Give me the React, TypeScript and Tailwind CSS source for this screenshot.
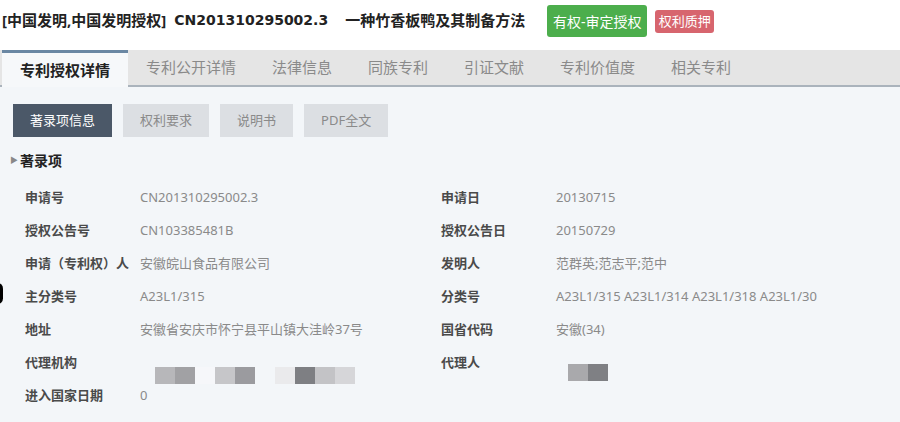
import React from 'react';

const font = { fontFamily: '"Noto Sans", "Noto Sans CJK SC", sans-serif' };

const tabs = ['专利授权详情', '专利公开详情', '法律信息', '同族专利', '引证文献', '专利价值度', '相关专利'];
const buttons = ['著录项信息', '权利要求', '说明书', 'PDF全文'];

const leftBlocks = ['#b7b7ba', '#a1a1a4', '#f6f7fa', '#c6c6c9', '#9b9b9f', 'transparent', '#eaeaec', '#7e7f83', '#c3c3c6', '#d6d6d9'];
const rightBlocks = ['#a9a9ac', '#7f8084'];

type Row = [string, React.ReactNode, string, React.ReactNode];

const Blur = ({ colors, className }: { colors: string[]; className: string }) => (
  <div className={`flex ${className}`}>
    {colors.map((c, i) => (
      <div key={i} className="w-[20px] h-[17px]" style={{ backgroundColor: c }} />
    ))}
  </div>
);

const rows: Row[] = [
  ['申请号', 'CN201310295002.3', '申请日', '20130715'],
  ['授权公告号', 'CN103385481B', '授权公告日', '20150729'],
  ['申请（专利权）人', '安徽皖山食品有限公司', '发明人', '范群英;范志平;范中'],
  ['主分类号', 'A23L1/315', '分类号', 'A23L1/315 A23L1/314 A23L1/318 A23L1/30'],
  ['地址', '安徽省安庆市怀宁县平山镇大洼岭37号', '国省代码', '安徽(34)'],
  [
    '代理机构',
    <Blur colors={leftBlocks} className="ml-[15px] translate-y-[13px]" />,
    '代理人',
    <Blur colors={rightBlocks} className="ml-[12px] translate-y-[10px]" />,
  ],
  ['进入国家日期', '0', '', ''],
];

export default function App() {
  return (
    <div className="relative w-[900px] h-[422px] overflow-hidden bg-white" style={font}>
      {/* header */}
      <div className="h-[50px] flex items-start pt-[8px] pl-[2px]">
        <div className="flex items-center h-[24px] text-[15px] font-bold text-[#222]">
          <span>[中国发明,中国发明授权]</span>
          <span className="ml-[8px] text-[14px]" style={{ fontFamily: '"DejaVu Sans", sans-serif' }}>
            CN201310295002.3
          </span>
          <span className="ml-[17px]">一种竹香板鸭及其制备方法</span>
        </div>
        <div className="ml-[22px] -mt-[3px] h-[32px] w-[100px] rounded-[3px] bg-[#4cae4c] text-white text-[14px] flex items-center justify-center">
          有权-审定授权
        </div>
        <div className="ml-[8px] mt-[2px] h-[23px] w-[59px] rounded-[3px] bg-[#d7656e] text-white text-[13px] flex items-center justify-center">
          权利质押
        </div>
      </div>

      {/* tab bar */}
      <div className="h-[37px] bg-[#e5e5e5] border-b-2 border-[#aab3bc] flex pl-[2px]">
        {tabs.map((t, i) =>
          i === 0 ? (
            <div
              key={t}
              className="h-[37px] px-[18px] flex items-center bg-[#f6f8fa] border-t-[3px] border-[#6a87a3] text-[15px] font-bold text-[#222]"
            >
              {t}
            </div>
          ) : (
            <div key={t} className="h-[35px] px-[18px] flex items-center text-[15px] text-[#8a8a8a]">
              {t}
            </div>
          )
        )}
      </div>

      {/* content */}
      <div className="bg-[#f3f6f9] h-full pt-[17px] pl-[13px]">
        <div className="flex gap-[11px]">
          {buttons.map((b, i) => (
            <div
              key={b}
              className={`h-[33px] px-[17px] flex items-center text-[13px] ${
                i === 0 ? 'bg-[#4b5868] text-white' : 'bg-[#dcdfe3] text-[#8a8a8a]'
              }`}
            >
              {b}
            </div>
          ))}
        </div>

        <div className="mt-[13px] h-[20px] flex items-center -ml-[3px]">
          <span className="text-[8px] text-[#888] mr-[2px]">▶</span>
          <span className="text-[14px] font-bold text-[#222]">著录项</span>
        </div>

        <div className="mt-[11px] pl-[12px]">
          {rows.map(([l1, v1, l2, v2], i) => (
            <div key={i} className="grid grid-cols-[115px_301px_115px_1fr] h-[33px] items-center text-[13px]">
              <div className="text-[#4a4a4a] font-semibold">{l1}</div>
              <div className="text-[#8a8a8a]">{v1}</div>
              <div className="text-[#4a4a4a] font-semibold">{l2}</div>
              <div className="text-[#8a8a8a]">{v2}</div>
            </div>
          ))}
        </div>
      </div>

      {/* stray dark edge on the left */}
      <div className="absolute left-[-8px] top-[283px] w-[11px] h-[21px] rounded-full bg-black" />
    </div>
  );
}
